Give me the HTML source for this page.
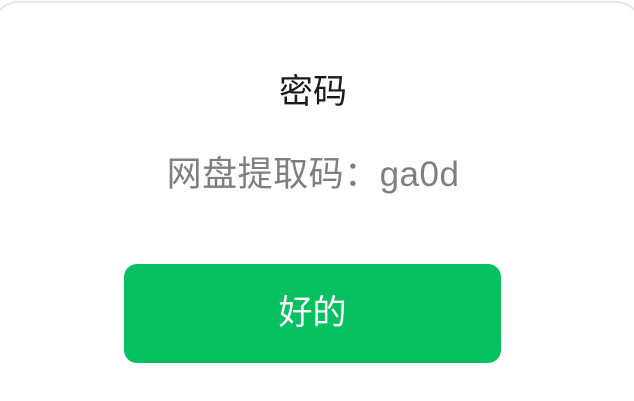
<!DOCTYPE html>
<html><head><meta charset="utf-8"><style>
html,body{margin:0;padding:0;width:634px;height:401px;overflow:hidden;background:#fff;}
.wrap{position:relative;width:634px;height:401px;overflow:hidden;}
.card{position:absolute;left:-8px;top:1px;width:650px;height:400px;border:2px solid #e6e6e6;border-bottom:none;border-radius:26px 26px 0 0;background:#fff;box-sizing:border-box;}
.t{position:absolute;left:-4px;width:634px;text-align:center;font-family:"Liberation Sans","Noto Sans CJK SC",sans-serif;}
.title{top:69px;font-size:34px;color:#1a1a1a;line-height:46px;}
.sub{top:152px;font-size:35px;color:#7f7f7f;line-height:46px;letter-spacing:0.5px;}
.btn{position:absolute;left:124px;top:264px;width:377px;height:99px;background:#07c160;border-radius:13px;color:#fff;font-family:"Liberation Sans","Noto Sans CJK SC",sans-serif;font-size:34px;line-height:99px;text-align:center;}
</style></head><body>
<div class="wrap">
<div class="card"></div>
<div class="t title">密码</div>
<div class="t sub">网盘提取码：ga0d</div>
<div class="btn">好的</div>
</div>
</body></html>
